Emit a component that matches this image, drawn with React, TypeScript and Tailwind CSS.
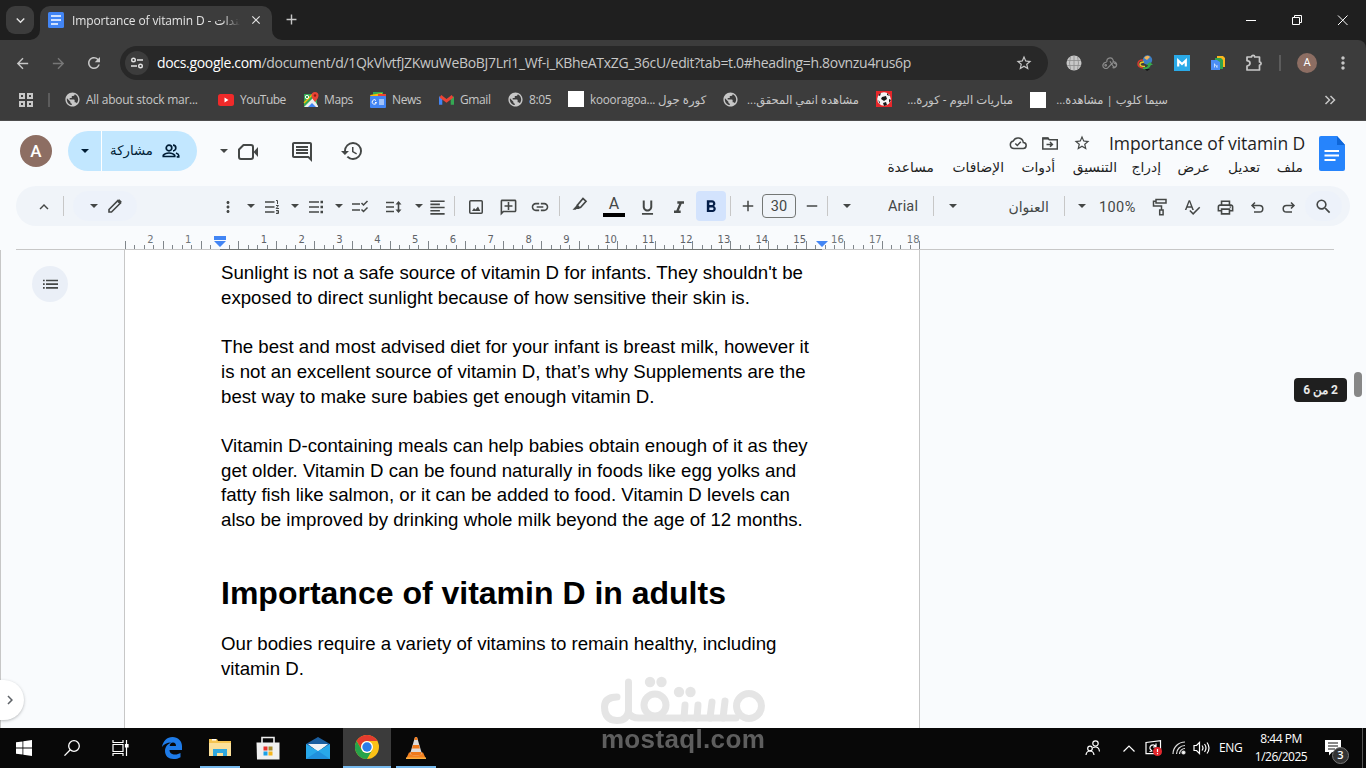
import React from "react";
import {
  MdAdd,
  MdArrowBack,
  MdArrowForward,
  MdClose,
  MdExpandLess,
  MdExpandMore,
  MdFormatAlignLeft,
  MdFormatBold,
  MdFormatItalic,
  MdFormatUnderlined,
  MdHistory,
  MdLink,
  MdMoreVert,
  MdOutlineAddComment,
  MdOutlineComment,
  MdOutlinePrint,
  MdPublic,
  MdRefresh,
  MdRemove,
  MdSearch,
  MdSpellcheck,
  MdStarBorder,
} from "react-icons/md";

interface BoxProps {
  className?: string;
  children?: React.ReactNode;
}

const Tool: React.FC<BoxProps> = ({ className = "", children }) => (
  <div className={`mt-[2px] flex h-[18px] w-[18px] shrink-0 items-center justify-center ${className}`}>{children}</div>
);

const Caret: React.FC<BoxProps> = ({ className = "" }) => (
  <svg viewBox="0 0 10 10" className={`h-[10px] w-[10px] shrink-0 ${className}`} fill="currentColor">
    <path d="M1 3h8L5 7z" />
  </svg>
);

const Sep: React.FC<BoxProps> = ({ className = "" }) => <div className={`h-5 w-px shrink-0 bg-[#c7c7c7] ${className}`} />;

/* ---------- browser chrome ---------- */

const DocsFavicon = () => (
  <svg viewBox="0 0 16 16" className="h-4 w-4 shrink-0">
    <rect width="16" height="16" rx="1.5" fill="#4285f4" />
    <path d="M3 4h10M3 8h10M3 12h7" stroke="#fff" strokeWidth="1.7" />
  </svg>
);

const TabStrip = () => (
  <div className="flex h-10 shrink-0 items-start bg-[#1f1f1f] text-[#e3e3e3]">
    <div className="mt-[6px] ml-[6px] flex h-7 w-7 items-center justify-center rounded-[9px] bg-[#3c3c3c]">
      <MdExpandMore size={17} />
    </div>
    <div className="relative mt-[6px] ml-[6px] flex h-[34px] w-[232px] items-center rounded-t-[10px] bg-[#3c3c3c] pb-[6px] pl-2">
      <svg viewBox="0 0 10 10" className="absolute bottom-0 -left-[10px] h-[10px] w-[10px]" fill="#3c3c3c">
        <path d="M10 0v10H0A10 10 0 0 0 10 0z" />
      </svg>
      <svg viewBox="0 0 10 10" className="absolute -right-[10px] bottom-0 h-[10px] w-[10px]" fill="#3c3c3c">
        <path d="M0 0v10h10A10 10 0 0 1 0 0z" />
      </svg>
      <DocsFavicon />
      <div className="mt-px ml-2 flex h-5 w-[170px] items-center [mask-image:linear-gradient(to_right,black_150px,transparent_168px)]">
        <span dir="ltr" className="text-[12px] tracking-[-0.13px] whitespace-nowrap">
          Importance of vitamin D - <bdi>تندات</bdi>
        </span>
      </div>
      <MdClose size={14} className="ml-[7px]" />
    </div>
    <MdAdd size={17} className="mt-[11px] ml-[11px] text-[#c7c7c7]" />
    <div className="ml-auto flex h-10 items-center text-white">
      <svg viewBox="0 0 102 10" className="mr-[18px] h-[10px] w-[102px]" fill="none" stroke="currentColor">
        <path d="M0 5.500h10M46.500 2.500h7v7h-7zM48.500 2.500v-2h7v7h-2M92 .5l9.500 9.500M101.500 .5L92 10" />
      </svg>
    </div>
  </div>
);

const AddressBar = () => (
  <div className="flex h-[46px] shrink-0 items-center rounded-tr-[8px] bg-[#3c3c3c] text-[#c7c7c7]">
    <MdArrowBack size={17} className="ml-[14px]" />
    <MdArrowForward size={17} className="ml-[19px] text-[#777]" />
    <MdRefresh size={18} className="ml-[18px]" />
    <div className="ml-[17px] flex h-[34px] w-[928px] shrink-0 items-center rounded-full bg-[#282828]">
      <div className="ml-[5px] flex h-6 w-6 shrink-0 items-center justify-center rounded-full bg-[#3c3c3c]">
        <svg viewBox="0 0 14 14" className="h-[14px] w-[14px]" fill="none" stroke="#e3e3e3" strokeWidth="1.4">
          <circle cx="3.500" cy="4" r="1.800" />
          <path d="M7 4h6M1 10h6" />
          <circle cx="10.500" cy="10" r="1.800" />
        </svg>
      </div>
      <div className="mb-[2px] ml-2 w-[780px] text-[14px] tracking-[-0.317px] whitespace-nowrap">
        <span className="text-white">docs.google.com</span>
        /document/d/1QkVlvtfJZKwuWeBoBJ7Lri1_Wf-i_KBheATxZG_36cU/edit?tab=t.0#heading=h.8ovnzu4rus6p
      </div>
      <MdStarBorder size={18} className="mr-[15px] ml-auto" />
    </div>
    <svg viewBox="0 0 16 16" className="ml-[18px] h-4 w-4">
      <circle cx="8" cy="8" r="7.500" fill="#c7c7c7" />
      <path d="M1 5.500h14M1 10.500h14M8 .5v15M4.500 1.500Q2.500 8 4.500 14.500M11.500 1.500Q13.500 8 11.500 14.500" fill="none" stroke="#8b8b8b" strokeWidth=".8" />
    </svg>
    <svg viewBox="0 0 16 12" className="ml-[20px] h-3 w-4" fill="none" stroke="#8b8b8b" strokeWidth="1.200">
      <path d="M5 5a3.200 3.200 0 1 1 4.500 2L6.500 10A3 3 0 1 1 4.500 5.500M8 4.200L11 9a1.800 1.800 0 1 0 1-2.500M10.500 5a3 3 0 1 1 0 5.500" />
      <circle cx="3.700" cy="8.300" r=".8" />
    </svg>
    <svg viewBox="0 0 16 16" className="ml-[19px] h-4 w-4">
      <circle cx="10.500" cy="5" r="4.700" fill="#3d7fc4" />
      <path d="M7 3q3-4 6-1l-3 3z" fill="#f2b35a" />
      <path d="M6 5Q1 5 1 9q0 3 5 4" fill="none" stroke="#d63b2f" strokeWidth="1.500" />
      <path d="M7 7Q3 7 3 9.500q0 2 5 2" fill="none" stroke="#e6c928" strokeWidth="1.500" />
      <path d="M6 12.500q5 0 5-2.500H9l4-3 3 3h-2q-2 5-8 4z" fill="#37a84a" />
      <path d="M8 14h5l-3 2z" fill="#111" />
    </svg>
    <svg viewBox="0 0 16 16" className="ml-[21px] h-4 w-4">
      <rect width="16" height="16" fill="#2aaae8" />
      <path d="M4.200 11.500V5.500L8 9l3.800-3.500v6" fill="none" stroke="#fff" strokeWidth="2.200" />
    </svg>
    <svg viewBox="0 0 16 16" className="ml-[20px] h-4 w-4">
      <path d="M7 1h6l2 2v9H7z" fill="#fbb81c" />
      <path d="M5 3h6l2 2v9H5z" fill="#2fa24f" />
      <path d="M1 5h6l3 2v8H1z" fill="#4b8ef5" />
      <path d="M4.500 8.500v4M7 10v3M4.500 9l2.500 3" stroke="#dceaff" fill="none" strokeWidth=".8" />
    </svg>
    <svg viewBox="0 0 18 18" className="ml-[19px] h-[18px] w-[18px]" fill="none" stroke="currentColor" strokeWidth="1.700">
      <path d="M2 3h4.500a1.600 1.600 0 0 1 3.200 0H14.500v5a1.600 1.600 0 0 1 0 3.200V16H2v-4q3-.5 3-2.700T2 6.700z" strokeLinejoin="round" />
    </svg>
    <div className="ml-[16px] h-4 w-[2px] bg-[#5c5c5c]" />
    <div className="ml-4 flex h-5 w-5 items-center justify-center rounded-full bg-[#8d6e63] font-[Roboto] text-[11px] text-white">A</div>
    <MdMoreVert size={20} className="ml-[16px]" />
  </div>
);

const Globe = () => <MdPublic size={17} className="shrink-0" />;

const MapsIcon = () => (
  <svg viewBox="0 0 16 16" className="h-4 w-4 shrink-0">
    <rect x="1" y="2" width="13" height="13" fill="#34a853" />
    <path d="M1 15L10 6l5 8v1z" fill="#eee" />
    <path d="M5 15l4-4 4 4z" fill="#4285f4" />
    <path d="M1 11l9-9" stroke="#fbbc04" strokeWidth="1.500" />
    <circle cx="4" cy="5" r="1.700" fill="none" stroke="#fff" />
    <path d="M12 10Q8.500 6 8.500 3.500a3.500 3.500 0 0 1 7 0Q15.500 6 12 10z" fill="#ea4335" />
    <circle cx="12" cy="3.500" r="1.200" fill="#8c1d18" />
  </svg>
);

const NewsIcon = () => (
  <svg viewBox="0 0 16 16" className="h-4 w-4 shrink-0">
    <path d="M3 0h10v5H3z" fill="#34a853" />
    <path d="M0 3l12-2 1 4H1z" fill="#fbbc04" />
    <path d="M8 2h8v4H8z" fill="#ea4335" />
    <rect y="4" width="16" height="12" rx="1" fill="#4285f4" />
    <path d="M6 8.500a2.200 2.200 0 1 0 .5 2H5M9 8h5M9 10h5M9 12h5" stroke="#fff" fill="none" />
  </svg>
);

const GmailIcon = () => (
  <svg viewBox="0 0 16 12" className="h-3 w-[15px] shrink-0">
    <path d="M0 2v9h3.500V4z" fill="#4285f4" />
    <path d="M16 2v9h-3.500V4z" fill="#34a853" />
    <path d="M1.500 2L8 7l6.500-5" fill="none" stroke="#ea4335" strokeWidth="3.200" />
  </svg>
);

const BallIcon = () => (
  <svg viewBox="0 0 16 16" className="h-4 w-4 shrink-0">
    <rect width="16" height="16" fill="#e8262a" />
    <circle cx="8" cy="8" r="6.800" fill="#f4f4f4" />
    <path d="M6 6l4-1 1 3-3 2-3-2zM2 4l3-2-1 3zM11 2l3 3-3-1zM2 9l2 2v2zM7 12l3-1 1 3-3 1zM13 8l2 1-2 3z" fill="#171717" />
  </svg>
);

const BookmarksBar = () => (
  <div className="flex h-[35px] shrink-0 items-center border-b border-[#4d4d4d] bg-[#3c3c3c] pb-[7px] text-[12px] tracking-[-0.16px] whitespace-nowrap text-[#c7c7c7]">
    <svg viewBox="0 0 14 14" className="ml-[19px] h-[14px] w-[14px] shrink-0" fill="none" stroke="currentColor" strokeWidth="2">
      <path d="M1 1h4v4H1zM9 1h4v4H9zM1 9h4v4H1zM9 9h4v4H9z" />
    </svg>
    <div className="ml-[15px] h-[14px] w-[2px] bg-[#5c5c5c]" />
    <div className="ml-[14px] flex w-[154px] items-center gap-[5px]">
      <Globe />
      <span className="tracking-[-0.25px]">All about stock mar...</span>
    </div>
    <div className="flex w-[85px] items-center gap-[6px]">
      <svg viewBox="0 0 16 12" className="h-3 w-4 shrink-0">
        <rect width="16" height="12" rx="2.500" fill="#f02a2a" />
        <path d="M6.500 3.500v5l4-2.500z" fill="#fff" />
      </svg>
      <span className="tracking-[-0.5px]">YouTube</span>
    </div>
    <div className="flex w-[67px] items-center gap-[5px]">
      <MapsIcon />
      <span className="tracking-[-0.4px]">Maps</span>
    </div>
    <div className="flex w-[69px] items-center gap-[6px]">
      <NewsIcon />
      <span className="tracking-[-0.4px]">News</span>
    </div>
    <div className="flex w-[68px] items-center gap-[6px]">
      <GmailIcon />
      <span className="tracking-[-0.4px]">Gmail</span>
    </div>
    <div className="flex w-[61px] items-center gap-[5px]">
      <Globe />
      <span className="tracking-[-0.4px]">8:05</span>
    </div>
    <div className="flex w-[154px] items-center gap-[6px]">
      <div className="h-4 w-4 bg-white" />
      <span dir="ltr" className="text-[11.700px] tracking-[-0.2px]">
        koooragoa... كورة جول
      </span>
    </div>
    <div className="flex w-[154px] items-center gap-[5px]">
      <Globe />
      <span dir="rtl" className="w-[115px] text-[11.500px] tracking-normal">مشاهدة انمي المحقق...</span>
    </div>
    <div className="flex w-[154px] items-center gap-[14px]">
      <BallIcon />
      <span dir="rtl" className="w-[107px] text-[11.700px] tracking-normal">مباريات اليوم - كورة...</span>
    </div>
    <div className="flex w-[154px] items-center gap-[9px]">
      <div className="h-4 w-4 bg-white" />
      <span dir="rtl" className="w-[113px] text-[11.500px] tracking-normal">سيما كلوب | مشاهدة...</span>
    </div>
    <svg viewBox="0 0 12 10" className="mr-[30px] ml-auto h-[10px] w-3" fill="none" stroke="currentColor" strokeWidth="1.500">
      <path d="M1.500 1l4 4-4 4M6.500 1l4 4-4 4" />
    </svg>
  </div>
);

/* ---------- document header ---------- */

const menus = [
  { label: "مساعدة", className: "w-[46px]" },
  { label: "الإضافات", className: "ml-[17px] w-[53px]" },
  { label: "أدوات", className: "ml-[17px] w-[34px]" },
  { label: "التنسيق", className: "ml-[17px] w-[45px]" },
  { label: "إدراج", className: "ml-[17px] w-[27px]" },
  { label: "عرض", className: "ml-[17px] w-[32px]" },
  { label: "تعديل", className: "ml-[16px] w-[34px]" },
  { label: "ملف", className: "ml-[17px] w-[26px]" },
];

const DocHeader = () => (
  <div className="flex h-[65px] shrink-0 text-[#444746]">
    <div className="flex h-[60px] items-center">
      <div className="ml-5 flex h-8 w-8 items-center justify-center rounded-full bg-[#8d6e63] pt-px font-[Roboto] text-[17px] font-medium text-white">
        A
      </div>
      <div className="ml-4 flex h-10 w-[129px] items-center rounded-full bg-[#c2e7ff] text-[#001d35]">
        <div className="flex h-10 w-[34px] items-center justify-center border-r border-white">
          <Caret />
        </div>
        <span dir="rtl" className="ml-[8px] w-[43px] text-[13.300px] font-medium whitespace-nowrap">
          مشاركة
        </span>
        <svg viewBox="0 0 18 14" className="ml-[9px] h-[14px] w-[18px]" fill="none" stroke="currentColor" strokeWidth="1.700">
          <circle cx="7" cy="4" r="2.800" />
          <path d="M1.300 12.500v-1.300Q3 9 7 9t5.700 2.200v1.300zM11 1.200a2.800 2.800 0 0 1 0 5.600M14 9q2.700 1 2.700 2.500v1.300h-2" />
        </svg>
      </div>
      <Caret className="ml-[22px]" />
      <svg viewBox="0 0 22 18" className="mt-[2px] ml-[9px] h-[18px] w-[22px]" fill="none" stroke="currentColor" strokeWidth="2">
        <path d="M5.500 2H13a2 2 0 0 1 2 2v10a2 2 0 0 1-2 2H3a2 2 0 0 1-2-2V6.500z" strokeLinejoin="round" />
        <path d="M15.500 9l4.500-5v10z" fill="currentColor" stroke="none" />
      </svg>
      <MdOutlineComment size={24} className="mt-px ml-[30px]" />
      <MdHistory size={24} className="ml-[26px]" />
    </div>
    <div className="ml-auto flex flex-col pt-[10px]">
      <div className="flex h-6 items-center justify-end">
        <svg viewBox="0 0 18 14" className="h-[14px] w-[18px]" fill="none" stroke="currentColor" strokeWidth="1.500">
          <path d="M5 12.500h9a3 3 0 0 0 .3-6A5.300 5.300 0 0 0 4.300 5 3.800 3.800 0 0 0 5 12.500z" />
          <path d="M6.300 7.500L8.300 9.500l3.500-3.700" />
        </svg>
        <svg viewBox="0 0 16 13" className="ml-[15px] h-[13px] w-4" fill="none" stroke="currentColor" strokeWidth="1.500">
          <path d="M.8 1h5l1.500 1.800h8V12H.8z" />
          <path d="M.8 1.600h6" strokeWidth="2" />
          <path d="M4.500 7.400h5.500M8 5l2.400 2.400L8 9.800" />
        </svg>
        <MdStarBorder size={18} className="ml-[15px]" />
        <span className="ml-[18px] w-[196px] font-['Open_Sans'] text-[17.500px] tracking-[-0.06px] whitespace-nowrap text-[#1f1f1f]">
          Importance of vitamin D
        </span>
      </div>
      <div dir="ltr" className="flex h-6 items-center justify-end pr-[2px] text-[13.800px] text-[#1f1f1f]">
        {menus.map((m) => (
          <span key={m.label} dir="rtl" className={`whitespace-nowrap ${m.className}`}>
            {m.label}
          </span>
        ))}
      </div>
    </div>
    <svg viewBox="0 0 26 35" className="mt-[15px] mr-[21px] ml-[14px] h-[35px] w-[26px]">
      <path d="M2 0h16l8 9v24a2 2 0 0 1-2 2H2a2 2 0 0 1-2-2V2a2 2 0 0 1 2-2z" fill="#2684fc" />
      <path d="M18 0l8 9h-8z" fill="#0e66d8" />
      <path d="M5.500 15h14.500M5.500 19.500h14.500M5.500 24h11" stroke="#fff" strokeWidth="2" />
    </svg>
  </div>
);

/* ---------- formatting toolbar ---------- */

const Toolbar = () => (
  <div className="mx-4 flex h-10 shrink-0 items-center rounded-full bg-[#f0f4f9] text-[#444746]">
    <Tool className="ml-[19px]">
      <MdExpandLess size={18} />
    </Tool>
    <Sep className="ml-[10px]" />
    <div className="ml-[9px] flex h-[30px] w-16 shrink-0 items-center rounded-full bg-[#edf2fa]">
      <Caret className="ml-4" />
      <Tool className="mb-[2px] ml-[7px]">
        <svg viewBox="0 0 16 16" className="h-4 w-4" fill="none" stroke="currentColor" strokeWidth="1.600">
          <path d="M2 14v-2.500L11 2.500l2.500 2.500-9 9z" />
          <path d="M10 3.500l2.300-2.300L14.800 3.700 12.500 6z" fill="currentColor" stroke="none" />
        </svg>
      </Tool>
    </div>
    <Tool className="ml-[82px]">
      <MdMoreVert size={18} />
    </Tool>
    <Caret className="ml-[9px]" />
    <Tool className="ml-[7px]">
      <svg viewBox="0 0 16 16" className="h-4 w-4" fill="none" stroke="currentColor" strokeWidth="1.500">
        <path d="M1 3h9.500M1 8h9.500M1 13h9.500" />
        <path d="M12 1.500h1.500V5M12 6.500h2.500L12.200 9.500H15M12 11.500h2.500v3H12M12.500 13h2" strokeWidth="1" />
      </svg>
    </Tool>
    <Caret className="ml-[9px]" />
    <Tool className="ml-[7px]">
      <svg viewBox="0 0 16 16" className="h-4 w-4" fill="none" stroke="currentColor" strokeWidth="1.500">
        <path d="M1 3h10M1 8h10M1 13h10" />
        <path d="M12.500 3h2.500M12.500 8h2.500M12.500 13h2.500" strokeWidth="2.500" />
      </svg>
    </Tool>
    <Caret className="ml-[9px]" />
    <Tool className="ml-[7px]">
      <svg viewBox="0 0 18 14" className="h-[14px] w-[18px]" fill="none" stroke="currentColor" strokeWidth="1.500">
        <path d="M1 4h8M1 10h8M10.500 3l2 2 4-4M10.500 9.500l2 2 4-4" />
      </svg>
    </Tool>
    <Tool className="ml-[16px]">
      <svg viewBox="0 0 18 14" className="h-[14px] w-[18px]" fill="none" stroke="currentColor" strokeWidth="1.600">
        <path d="M1 2.500h8M1 7h8M1 11.500h8M13.500 3v8" />
        <path d="M10.500 4.500l3-3.500 3 3.500zM10.500 9.500l3 3.500 3-3.500z" fill="currentColor" stroke="none" />
      </svg>
    </Tool>
    <Caret className="ml-[11px]" />
    <Tool className="ml-1">
      <MdFormatAlignLeft size={19} className="shrink-0" />
    </Tool>
    <Sep className="ml-2" />
    <Tool className="ml-3">
      <svg viewBox="0 0 14 14" className="h-[14px] w-[14px]" fill="none" stroke="currentColor" strokeWidth="1.500">
        <rect x=".75" y=".75" width="12.500" height="12.500" rx="1" />
        <path d="M3 11l2-3 1.500 1.500L9 6.500l2.300 4.500z" fill="currentColor" stroke="none" />
      </svg>
    </Tool>
    <Tool className="ml-[14px]">
      <MdOutlineAddComment size={19} className="shrink-0 -scale-x-100" />
    </Tool>
    <Tool className="ml-[14px]">
      <MdLink size={20} className="shrink-0" />
    </Tool>
    <Sep className="ml-[10px]" />
    <Tool className="ml-[11px] pb-[7px]">
      <svg viewBox="0 0 16 14" className="h-[14px] w-4 shrink-0" fill="none" stroke="currentColor" strokeWidth="1.700">
        <path d="M5.500 8L11 1.500l3 2.700-5.500 6.300H6z" />
        <path d="M5 7.500l3.500 3L7 12H4.500L3.700 12.800H.5L4 9z" fill="currentColor" stroke="none" />
      </svg>
    </Tool>
    <div className="mt-[2px] ml-[14px] flex w-[22px] shrink-0 flex-col items-center">
      <span className="h-[15px] font-[Roboto] text-[16px] leading-[13px]">A</span>
      <div className="mt-px h-1 w-[22px] bg-black" />
    </div>
    <Tool className="ml-[13px]">
      <MdFormatUnderlined size={19} className="shrink-0" />
    </Tool>
    <Tool className="mt-[3px] ml-[14px]">
      <MdFormatItalic size={20} className="shrink-0" />
    </Tool>
    <div className="ml-2 flex h-[30px] w-[30px] shrink-0 items-center justify-center rounded-[4px] bg-[#d3e3fd] pt-px text-[#041e49]">
      <MdFormatBold size={20} />
    </div>
    <Sep className="ml-1" />
    <Tool className="mb-[2px] ml-2">
      <MdAdd size={18} />
    </Tool>
    <div className="ml-[5px] flex h-6 w-[34px] shrink-0 items-center justify-center rounded-[4px] border border-[#747775] pt-px font-[Roboto] text-[14.500px]">
      30
    </div>
    <Tool className="mb-[2px] ml-[7px]">
      <MdRemove size={18} />
    </Tool>
    <Sep className="ml-[6px]" />
    <Caret className="ml-[14px]" />
    <span className="mt-px ml-9 w-[30px] shrink-0 font-[Roboto] text-[14.500px] tracking-[0.15px]">Arial</span>
    <Sep className="ml-[15px]" />
    <Caret className="ml-[14px]" />
    <span dir="rtl" className="ml-[50px] w-[41px] shrink-0 text-[14px] whitespace-nowrap">
      العنوان
    </span>
    <Sep className="ml-[15px]" />
    <Caret className="ml-[12px]" />
    <span className="mt-[3px] ml-3 w-[37px] shrink-0 font-[Roboto] text-[14.500px] tracking-[0.4px]">100%</span>
    <Tool className="ml-[15px]">
      <svg viewBox="0 0 16 18" className="h-[18px] w-4" fill="none" stroke="currentColor" strokeWidth="1.500">
        <path d="M4 1.500h10v3.500H4zM4 3.300H1.500v4.700h8V12M7.700 12h3.400v4.700H7.700z" />
      </svg>
    </Tool>
    <Tool className="ml-[14px]">
      <MdSpellcheck size={18} />
    </Tool>
    <Tool className="ml-[15px]">
      <MdOutlinePrint size={19} className="shrink-0" />
    </Tool>
    <Tool className="ml-[14px]">
      <svg viewBox="0 0 14 14" className="mt-px h-[14px] w-[14px]" fill="none" stroke="currentColor" strokeWidth="1.500">
        <path d="M5 1.500L2 4.500 5 7.500M2 4.500h7.500a3.300 3.300 0 0 1 0 6.600H4" />
      </svg>
    </Tool>
    <Tool className="ml-[14px]">
      <svg viewBox="0 0 14 14" className="mt-px h-[14px] w-[14px]" fill="none" stroke="currentColor" strokeWidth="1.500">
        <path d="M9 1.500l3 3-3 3M12 4.500H4.500a3.300 3.300 0 0 0 0 6.600H10" />
      </svg>
    </Tool>
    <div className="ml-[7px] flex h-[30px] w-[37px] shrink-0 items-center justify-center rounded-full bg-[#edf2fa] pr-px">
      <MdSearch size={19} />
    </div>
  </div>
);

/* ---------- ruler ---------- */

const CM = 37.83;
const ZERO = 220;

const Ruler = () => {
  const ticks: { x: number; tall: boolean }[] = [];
  for (let i = -10; i <= 74; i++) {
    if (i === 0) continue;
    ticks.push({ x: Math.floor(ZERO + (i * CM) / 4), tall: Math.abs(i % 4) === 2 });
  }
  const numbers = [-2, -1, ...Array.from({ length: 18 }, (_, i) => i + 1)];

  return (
    <svg viewBox="0 0 1366 24" className="h-6 w-[1366px] shrink-0">
      <path d="M16 23.500h1318" stroke="#c7c7c7" />
      <path d="M220 23.500h602" stroke="#747775" />
      {ticks.map((t) => (
        <path key={t.x} d={`M${t.x + 0.5} ${t.tall ? 15 : 19}V23`} stroke="#80868b" />
      ))}
      {numbers.map((n) => (
        <text
          key={n}
          x={ZERO + n * CM + (n > 9 ? 12.2 : 6)}
          y="17"
          textAnchor="middle"
          className={n < 0 || n > 15 ? "fill-[#70767b] font-['DejaVu_Sans'] text-[10px]" : "fill-[#5f6368] font-['DejaVu_Sans'] text-[10px]"}
        >
          {Math.abs(n)}
        </text>
      ))}
      <rect x="214" y="10" width="12" height="4" fill="#4285f4" />
      <path d="M214 15h12l-6 6zM816 15h12l-6 6z" fill="#4285f4" />
    </svg>
  );
};

/* ---------- document ---------- */

const paragraphs = [
  ["Sunlight is not a safe source of vitamin D for infants. They shouldn't be", "exposed to direct sunlight because of how sensitive their skin is."],
  [
    "The best and most advised diet for your infant is breast milk, however it",
    "is not an excellent source of vitamin D, that’s why Supplements are the",
    "best way to make sure babies get enough vitamin D.",
  ],
  [
    "Vitamin D-containing meals can help babies obtain enough of it as they",
    "get older. Vitamin D can be found naturally in foods like egg yolks and",
    "fatty fish like salmon, or it can be added to food. Vitamin D levels can",
    "also be improved by drinking whole milk beyond the age of 12 months.",
  ],
];

const Paragraph: React.FC<{ lines: string[] }> = ({ lines }) => (
  <p className="mb-[24.700px]">
    {lines.map((line) => (
      <span key={line} className="block whitespace-nowrap">
        {line}
      </span>
    ))}
  </p>
);

const Watermark = () => (
  <div className="absolute top-[675px] left-[600px] z-20 flex w-[166px] flex-col items-center opacity-90">
    <svg viewBox="0 0 166 52" className="h-[52px] w-[166px]" fill="none" stroke="#e3e3e3" strokeWidth="7" strokeLinecap="round">
      <path d="M17 22Q4.500 22 4.500 32q0 13 12 13.500Q27 46 28.500 36V7M28.500 38Q32 43.500 40 43H136" />
      <circle cx="55" cy="30" r="11" />
      <path d="M84 43l1-13M97 43l1-13M110 43l2-16M123 43l2-17" />
      <circle cx="149" cy="31" r="12.500" />
      <g fill="#e3e3e3" stroke="none">
        <circle cx="50" cy="7" r="5.200" />
        <circle cx="61.500" cy="7" r="5.200" />
        <circle cx="79" cy="17" r="5.200" />
        <circle cx="90.500" cy="17" r="5.200" />
      </g>
    </svg>
    <span className="text-[26px] leading-[24px] font-bold tracking-[0.35px] text-[#686868] font-['Liberation_Sans']">mostaql.com</span>
  </div>
);

const DocumentArea = () => (
  <div className="flex min-h-0 grow border-l border-[#c7c7c7] font-['Liberation_Sans',Arial,sans-serif]">
    <div className="flex w-[123px] shrink-0 flex-col justify-between">
      <div className="mt-[16px] ml-[31px] flex h-9 w-9 items-center justify-center rounded-full bg-[#eaeff7] text-[#444746]">
        <svg viewBox="0 0 16 12" className="h-3 w-4" fill="none" stroke="currentColor" strokeWidth="1.700">
          <path d="M1 2.500h1.700M4 2.500h12M1 6.200h1.700M4 6.200h12M1 9.900h1.700M4 9.900h12" />
        </svg>
      </div>
      <div className="mb-2 -ml-px flex h-10 w-6 items-center rounded-r-full bg-white shadow-[0_1px_3px_rgba(60,64,67,0.35)]">
        <MdExpandMore size={18} className="ml-px -rotate-90 text-[#5f6368]" />
      </div>
    </div>
    <div className="w-[796px] shrink-0 border-x border-[#c7c7c7] bg-white pl-24 text-[18.667px] leading-[24.700px] text-black">
      <div className="mt-[11px]">
        {paragraphs.map((lines) => (
          <Paragraph key={lines[0]} lines={lines} />
        ))}
      </div>
      <h1 className="mt-[41px] text-[32px] leading-[38px] font-bold whitespace-nowrap">Importance of vitamin D in adults</h1>
      <div className="mt-[20.300px]">
        <Paragraph lines={["Our bodies require a variety of vitamins to remain healthy, including", "vitamin D."]} />
      </div>
    </div>
    <div className="flex grow items-start justify-end">
      <div
        dir="rtl"
        className="mt-[128px] flex h-6 w-[53px] items-center justify-center rounded-[4px] bg-[#1f1f1f] font-[Roboto] text-[12px] font-bold whitespace-nowrap text-[#e8e8e8]"
      >
        2 من 6
      </div>
      <div className="mt-[122px] mr-1 ml-[7px] h-[25px] w-2 rounded-full bg-[#878787]" />
    </div>
  </div>
);

/* ---------- taskbar ---------- */

const EdgeIcon = () => (
  <svg viewBox="0 0 20 22" className="h-[22px] w-5">
    <path
      d="M0 10C1 4 5 0 10.500 0 16 0 20 4 20 9v4H7.500c0 3 2.500 4.500 5.500 4.500 2.200 0 4-.6 5.500-1.500v4.200C16.500 21.500 14 22 11.500 22 6.500 22 3 19 3 14c0-4 2.500-7 6-8.500C5 5.500 2 7 0 10zm7.700-1H14c0-2-1-3.500-3-3.500S8 7 7.700 9z"
      fill="#1e7be8"
    />
  </svg>
);

const FolderIcon = () => (
  <svg viewBox="0 0 22 20" className="h-5 w-[22px]">
    <path d="M0 1h8l1 2h13v15H0z" fill="#f5c451" />
    <path d="M0 5h22v13H0z" fill="#fbe09a" />
    <path d="M3 1h4v1.500H3z" fill="#fff" />
    <path d="M4 18v-7h14v7h-4v-3H8v3z" fill="#2fa8e0" />
  </svg>
);

const StoreIcon = () => (
  <svg viewBox="0 0 24 24" className="h-6 w-6">
    <path d="M6 7V1.500h12V7" fill="none" stroke="#eee" strokeWidth="1.600" />
    <path d="M.5 6.500h23V23.500H1z" fill="#f0f0f0" />
    <path d="M7.500 10.500h4v4h-4z" fill="#e8322c" />
    <path d="M12.500 10.500h4v4h-4z" fill="#a58a2c" />
    <path d="M7.500 15.500h4v4h-4z" fill="#1ba1e8" />
    <path d="M12.500 15.500h4v4h-4z" fill="#f5b51b" />
  </svg>
);

const MailIcon = () => (
  <svg viewBox="0 0 24 22" className="h-[22px] w-6">
    <path d="M0 7l12-7 12 7v3H0z" fill="#1b5fa0" />
    <path d="M2 7h20l-10 8z" fill="#f1f4f7" />
    <path d="M0 7v15h24V7L12 14z" fill="#28a8ea" />
    <path d="M0 22l12-8 12 8z" fill="#2090dc" />
  </svg>
);

const ChromeIcon = () => (
  <svg viewBox="0 0 24 24" className="h-6 w-6">
    <circle cx="12" cy="12" r="12" fill="#fbc116" />
    <path d="M1.600 6A12 12 0 0 1 22.400 6H12a6 6 0 0 0-5.200 9z" fill="#e33b2e" />
    <path d="M1.600 6A12 12 0 0 0 12 24l5.200-9a6 6 0 0 1-10.400 0z" fill="#26a34a" />
    <circle cx="12" cy="12" r="6" fill="#fff" />
    <circle cx="12" cy="12" r="4.700" fill="#2b7de9" />
  </svg>
);

const VlcIcon = () => (
  <svg viewBox="0 0 20 22" className="h-[22px] w-5">
    <path d="M3 15.500h14L20 22H0z" fill="#f58220" />
    <path d="M0 20.500h20V22H0z" fill="#fbb040" />
    <path d="M9 0h2l5 17q-6 3-12 0z" fill="#dcdcdc" />
    <path d="M9.200 0h1.600l.9 3H8.300zM7 8h6l.9 3.500H6zM5 15l10 0 .7 2.300q-5.700 2.500-11.400 0z" fill="#f07a1c" />
  </svg>
);

const Taskbar = () => (
  <div className="relative flex h-10 shrink-0 items-center bg-[#080808] text-white">
    <svg viewBox="0 0 16 16" className="ml-4 h-4 w-4" fill="#fff">
      <path d="M0 2.300L6.500 1.400v6.200H0zM7.300 1.300L16 0v7.600H7.300zM0 8.400h6.500v6.200L0 13.700zM7.300 8.400H16V16l-8.700-1.200z" />
    </svg>
    <svg viewBox="0 0 16 16" className="ml-8 h-4 w-4" fill="none" stroke="#fff" strokeWidth="1.300">
      <circle cx="10" cy="6" r="5.300" />
      <path d="M6.300 9.800L.5 15.600" />
    </svg>
    <svg viewBox="0 0 17 16" className="ml-8 h-4 w-[17px]" fill="none" stroke="#fff" strokeWidth="1.200">
      <path d="M1 0v2.500h10V0M1 16v-2.500h10V16M1 4.500h10v7H1zM14.500 0v16" />
      <path d="M13.500 4.500h2.500v2.500h-2.500z" fill="#fff" />
    </svg>
    <div className="ml-[19px] flex h-10 w-12 items-center justify-center">
      <EdgeIcon />
    </div>
    <div className="flex h-10 w-12 items-center justify-center">
      <FolderIcon />
    </div>
    <div className="flex h-10 w-12 items-center justify-center pb-px">
      <StoreIcon />
    </div>
    <div className="ml-[2px] flex h-10 w-12 items-center justify-center">
      <MailIcon />
    </div>
    <div className="ml-px flex h-10 w-12 items-center justify-center border-b-2 border-[#76b9ed] bg-[#3b3b3b]">
      <ChromeIcon />
    </div>
    <div className="ml-px flex h-10 w-12 items-center justify-center">
      <VlcIcon />
    </div>
    <div className="absolute bottom-0 left-[200px] h-[2px] w-10 bg-[#76b9ed]" />
    <div className="absolute bottom-0 left-[396px] h-[2px] w-10 bg-[#76b9ed]" />
    <div className="ml-auto flex items-center">
      <svg viewBox="0 0 16 16" className="h-4 w-4" fill="none" stroke="#fff" strokeWidth="1.200">
        <circle cx="10.500" cy="3.500" r="2.700" />
        <circle cx="5" cy="8.500" r="2.300" />
        <path d="M1 15q.5-4 4-4t4 4M8 7.500q6-2 6.500 4" />
      </svg>
      <svg viewBox="0 0 12 7" className="ml-[22px] h-[7px] w-3" fill="none" stroke="#fff" strokeWidth="1.200">
        <path d="M.5 6.500L6 1l5.500 5.500" />
      </svg>
      <svg viewBox="0 0 18 16" className="ml-[10px] h-4 w-[18px]" fill="none" stroke="#fff" strokeWidth="1.200">
        <path d="M1 2.500L15.500.7v13H1z" />
        <path d="M5 9V7q1-2.500 4-2l2 2M11 3.500v3.500H8M4.500 11.500l3-.5M5 9l2 2" />
        <circle cx="12.500" cy="11.500" r="4.500" fill="#e3262c" stroke="none" />
        <path d="M12.500 9v3M12.500 13v1.200" />
      </svg>
      <svg viewBox="0 0 14 14" className="ml-[9px] h-[14px] w-[14px]" fill="none" stroke="#ddd" strokeWidth="1.200">
        <path d="M1 13A12 12 0 0 1 13 1M4.500 13A8.500 8.500 0 0 1 13 4.500M7.500 13A5.500 5.500 0 0 1 13 7.500" />
        <circle cx="11.500" cy="11.500" r="1.500" fill="#fff" />
      </svg>
      <svg viewBox="0 0 18 14" className="ml-[7px] h-[14px] w-[18px]" fill="none" stroke="#fff" strokeWidth="1.200">
        <path d="M1 4.500h2.500L6.500 1.500v11L3.500 9.500H1zM9 4.500q2 2.500 0 5M11.500 3q3 4 0 8M14 1.500q4 5.500 0 11" />
      </svg>
      <span className="ml-[8px] w-[25px] text-[12px] tracking-[-0.300px]">ENG</span>
      <div className="ml-[9px] flex w-[56px] flex-col items-center text-[12px] leading-[18px] tracking-[-0.500px] whitespace-nowrap">
        <span>8:44 PM</span>
        <span>1/26/2025</span>
      </div>
      <div className="relative ml-[16px] h-[26px] w-6">
        <svg viewBox="0 0 16 16" className="mt-[5px] h-4 w-4">
          <path d="M0 0h16v12H7l-3 3.500V12H0z" fill="#fff" />
          <path d="M3 3h10M3 6h10M3 9h7" stroke="#111" />
        </svg>
        <div className="absolute top-[12px] left-[7px] flex h-[17px] w-[17px] items-center justify-center rounded-full border border-[#777] bg-[#333] text-[11px] font-semibold">
          3
        </div>
      </div>
      <div className="mr-[3px] ml-[13px] h-10 w-px bg-[#555]" />
    </div>
  </div>
);

export default function App() {
  return (
    <div
      dir="ltr"
      className="relative flex h-[768px] w-[1366px] flex-col overflow-hidden bg-[#f9fbfd] font-['Open_Sans','Noto_Sans','DejaVu_Sans',sans-serif]"
    >
      <div className="flex shrink-0 flex-col bg-[#1f1f1f]">
        <TabStrip />
        <AddressBar />
        <BookmarksBar />
      </div>
      <DocHeader />
      <Toolbar />
      <Ruler />
      <DocumentArea />
      <Taskbar />
      <Watermark />
    </div>
  );
}
